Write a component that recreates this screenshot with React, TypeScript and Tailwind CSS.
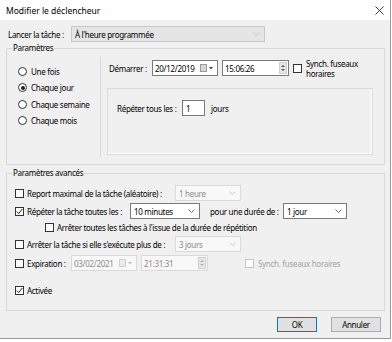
import type { ReactNode } from 'react'

function Chevron({ disabled }: { disabled?: boolean }) {
  return (
    <svg width="7" height="4" viewBox="0 0 7 4" className="shrink-0">
      <path d="M0.5 0.5 L3.5 3.5 L6.5 0.5" fill="none" stroke={disabled ? '#c4c4c4' : '#606060'} strokeWidth="0.9" />
    </svg>
  )
}

function Check({ checked, disabled }: { checked?: boolean; disabled?: boolean }) {
  return (
    <span
      className={
        'w-[9px] h-[9px] shrink-0 border bg-white flex items-center justify-center ' +
        (disabled ? 'border-[#c6c6c6]' : 'border-[#333333]')
      }
    >
      {checked && (
        <svg width="7" height="7" viewBox="0 0 7 7">
          <path d="M0.8 3.6 L2.7 5.6 L6.3 1" fill="none" stroke="#222" strokeWidth="1" />
        </svg>
      )}
    </span>
  )
}

function Radio({ checked }: { checked?: boolean }) {
  return (
    <span className="w-[9px] h-[9px] shrink-0 rounded-full border border-[#333333] bg-white flex items-center justify-center">
      {checked && <span className="w-[4px] h-[4px] rounded-full bg-[#222]" />}
    </span>
  )
}

function Combo({ value, className, disabled }: { value: string; className: string; disabled?: boolean }) {
  return (
    <div
      className={
        'h-[16px] shrink-0 flex items-center justify-between pl-[3px] pr-[4px] border ' +
        (disabled ? 'bg-[#f8f8f8] border-[#d9d9d9] text-[#8a8a8a] ' : 'bg-white border-[#7a7a7a] text-black ') +
        className
      }
    >
      <span>{value}</span>
      <Chevron disabled={disabled} />
    </div>
  )
}

function DateBox({ value, disabled }: { value: string; disabled?: boolean }) {
  return (
    <div
      className={
        'w-[66px] h-[16px] shrink-0 flex items-center justify-between pl-[2px] pr-[4px] border ' +
        (disabled ? 'bg-[#f8f8f8] border-[#d9d9d9] text-[#8a8a8a]' : 'bg-white border-[#7a7a7a]')
      }
    >
      <span>{value}</span>
      <span className="flex items-center gap-[1px]">
        <svg width="8" height="8" viewBox="0 0 8 8">
          <rect x="0.5" y="0.5" width="6" height="7" fill={disabled ? '#ececec' : '#d6d6d6'} stroke={disabled ? '#d0d0d0' : '#9a9a9a'} strokeWidth="1" />
        </svg>
        <svg width="4" height="3" viewBox="0 0 4 3">
          <path d="M0 0 L4 0 L2 2.5 Z" fill={disabled ? '#c0c0c0' : '#444'} />
        </svg>
      </span>
    </div>
  )
}

function TimeBox({ value, disabled }: { value: string; disabled?: boolean }) {
  return (
    <div
      className={
        'w-[67px] h-[16px] shrink-0 flex items-center justify-between pl-[2px] pr-[1px] border ' +
        (disabled ? 'bg-[#f8f8f8] border-[#d9d9d9] text-[#8a8a8a]' : 'bg-white border-[#7a7a7a]')
      }
    >
      <span>{value}</span>
      <span className="w-[8px] h-[12px] bg-[#e6e6e6] border border-[#d0d0d0] flex flex-col items-center justify-center gap-[2px]">
        <svg width="4" height="2" viewBox="0 0 4 2">
          <path d="M0 2 L4 2 L2 0 Z" fill={disabled ? '#b0b0b0' : '#555'} />
        </svg>
        <svg width="4" height="2" viewBox="0 0 4 2">
          <path d="M0 0 L4 0 L2 2 Z" fill={disabled ? '#b0b0b0' : '#555'} />
        </svg>
      </span>
    </div>
  )
}

function Row({ className, children }: { className: string; children: ReactNode }) {
  return <div className={'h-[16px] flex items-center whitespace-nowrap ' + className}>{children}</div>
}

export default function App() {
  return (
    <div className="w-[392px] h-[342px] bg-white font-['Noto_Sans',sans-serif] text-[8px] leading-[11px] tracking-[-0.3px] text-black">
      <div className="w-[391px] h-[339px] bg-[#f0f0f0] border-r border-b border-[#9b9b9b] flex flex-col">
        <div className="h-[20px] bg-white flex items-center justify-between pl-[6px] pr-[6px] text-[8.5px] tracking-normal">
          <span>Modifier le déclencheur</span>
          <svg width="9" height="9" viewBox="0 0 9 9">
            <path d="M0.5 0.5 L8.5 8.5 M8.5 0.5 L0.5 8.5" stroke="#222" strokeWidth="0.9" />
          </svg>
        </div>

        <div className="flex flex-col px-[6px]">
          <Row className="mt-[6px] pl-[2px]">
            <span className="w-[63px]">Lancer la tâche :</span>
            <div className="w-[194px] h-[16px] flex items-center justify-between pl-[3px] pr-[4px] bg-[#e5e5e5] border border-[#c8c8c8]">
              <span>À l'heure programmée</span>
              <Chevron disabled />
            </div>
          </Row>

          <fieldset className="w-[379px] h-[123px] border border-[#d8d8d8] p-0 m-0">
            <legend className="ml-[5px] px-[1px] h-[12px] leading-[12px]">Paramètres</legend>
            <div className="flex h-[110px]">
              <div className="w-[93px] flex flex-col pt-[9px] pl-[11px] whitespace-nowrap">
                {[
                  ['Une fois', false],
                  ['Chaque jour', true],
                  ['Chaque semaine', false],
                  ['Chaque mois', false],
                ].map(([label, on]) => (
                  <div key={label as string} className="h-[16.5px] flex items-center gap-[4px]">
                    <Radio checked={on as boolean} />
                    <span>{label as string}</span>
                  </div>
                ))}
              </div>
              <div className="mt-[3px] h-[100px] border-l border-[#d8d8d8]" />
              <div className="flex flex-col">
                <Row className="mt-[6px] pl-[8px]">
                  <span className="w-[43px]">Démarrer :</span>
                  <DateBox value="20/12/2019" />
                  <span className="w-[4px]" />
                  <TimeBox value="15:06:26" />
                  <span className="w-[4px]" />
                  <Check />
                  <span className="ml-[4px] leading-[10px] pt-[1px]">
                    Synch. fuseaux
                    <br />
                    horaires
                  </span>
                </Row>
                <div className="ml-[6px] mt-[12px] w-[266px] h-[67px] border border-[#dadada] shadow-[inset_-1px_-1px_0_#ffffff] pt-[11px] pl-[9px]">
                  <Row className="">
                    <span className="w-[65px]">Répéter tous les :</span>
                    <div className="w-[23px] h-[16px] bg-white border border-[#7a7a7a] flex items-center pl-[3px]">1</div>
                    <span className="ml-[6px]">jours</span>
                  </Row>
                </div>
              </div>
            </div>
          </fieldset>

          <fieldset className="mt-[2px] w-[379px] h-[144px] border border-[#d8d8d8] p-0 m-0">
            <legend className="ml-[5px] px-[1px] h-[12px] leading-[12px]">Paramètres avancés</legend>
            <div className="flex flex-col pl-[8px]">
              <Row className="mt-[6px]">
                <Check />
                <span className="ml-[3px] w-[148px]">Report maximal de la tâche (aléatoire) :</span>
                <Combo value="1 heure" className="w-[66px]" disabled />
              </Row>
              <Row className="mt-[2px]">
                <Check checked />
                <span className="ml-[3px] w-[103px]">Répéter la tâche toutes les :</span>
                <Combo value="10 minutes" className="w-[70px]" />
                <span className="ml-[10px] w-[73px]">pour une durée de :</span>
                <Combo value="1 jour" className="w-[64px]" />
              </Row>
              <Row className="mt-0 pl-[30px]">
                <Check />
                <span className="ml-[3px]">Arrêter toutes les tâches à l'issue de la durée de répétition</span>
              </Row>
              <Row className="mt-[1px]">
                <Check />
                <span className="ml-[3px] w-[148px]">Arrêter la tâche si elle s'exécute plus de :</span>
                <Combo value="3 jours" className="w-[66px]" disabled />
              </Row>
              <Row className="mt-[3px]">
                <Check />
                <span className="ml-[3px] w-[44px]">Expiration :</span>
                <DateBox value="03/02/2021" disabled />
                <span className="w-[4px]" />
                <TimeBox value="21:31:31" disabled />
                <span className="w-[37px]" />
                <Check disabled />
                <span className="ml-[4px] text-[#a3a3a3]">Synch. fuseaux horaires</span>
              </Row>
              <Row className="mt-[11px]">
                <Check checked />
                <span className="ml-[3px]">Activée</span>
              </Row>
            </div>
          </fieldset>

          <div className="mt-[6px] flex justify-end pr-[3px] gap-[14px]">
            <button className="w-[40px] h-[15px] bg-[#e1e1e1] border border-[#0078d7] flex items-center justify-center">OK</button>
            <button className="w-[50px] h-[15px] bg-[#e1e1e1] border border-[#adadad] flex items-center justify-center">Annuler</button>
          </div>
        </div>
      </div>
    </div>
  )
}
